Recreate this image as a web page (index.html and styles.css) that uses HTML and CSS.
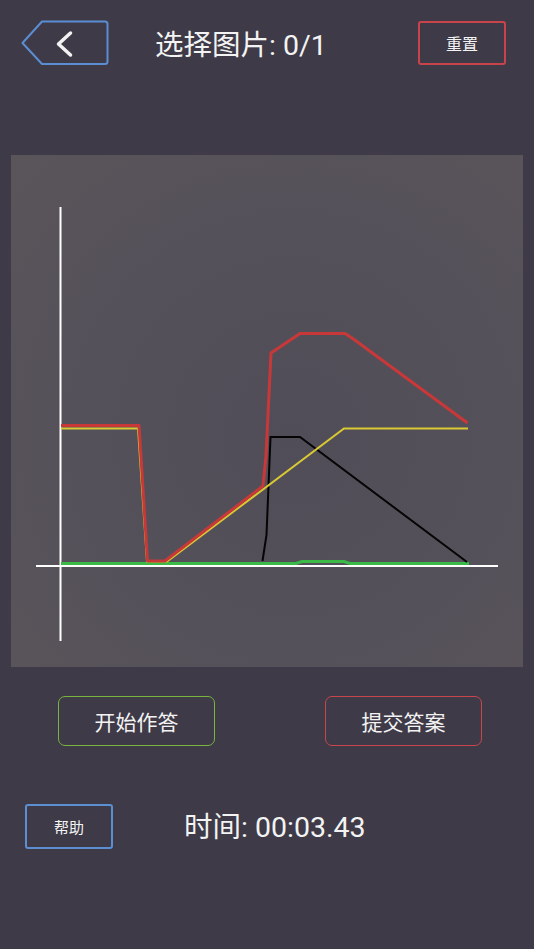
FILE: index.html
```html
<!DOCTYPE html>
<html lang="zh">
<head>
<meta charset="utf-8">
<title>选择图片</title>
<link rel="stylesheet" href="styles.css">
</head>
<body>
<div class="app">
  <header class="header">
    <button class="back" aria-label="返回">
      <svg class="back-svg" width="88" height="46" viewBox="0 0 88 46">
        <path d="M21 1.5 L84 1.5 Q86.5 1.5 86.5 4 L86.5 41.5 Q86.5 44 84 44 L21 44 L1.5 23 Z" fill="none" stroke="#5b8dd3" stroke-width="2" stroke-linejoin="round"/>
        <path d="M49.5 13 L37.5 24 L49.5 35" fill="none" stroke="#f2f2f2" stroke-width="3.5" stroke-linecap="round" stroke-linejoin="round"/>
      </svg>
    </button>
    <h1 class="title">选择图片: 0/1</h1>
    <button class="btn btn-reset">重置</button>
  </header>

  <section class="panel">
    <svg class="chart" width="512" height="512" viewBox="11 155 512 512">
      <line x1="60.5" y1="207" x2="60.5" y2="641" stroke="#ffffff" stroke-width="2"/>
      <line x1="36" y1="566" x2="498" y2="566" stroke="#ffffff" stroke-width="2"/>
      <polyline points="61,563.5 296,563.5 302,561.5 344,561.5 350,563.5 469,563.5" fill="none" stroke="#3cba48" stroke-width="3"/>
      <polyline points="262.5,561 266.5,535 270.5,437 300,437 467,562" fill="none" stroke="#050505" stroke-width="2"/>
      <polyline points="61,428.5 138,428.5 147,561.5 167,561.5 344,428.5 468,428.5" fill="none" stroke="#d9c933" stroke-width="2"/>
      <polyline points="61,425.5 139,425.5 147.5,561 165,561 263,486 266,456 271,353 300,333.5 345,333.5 352,338 467.5,423" fill="none" stroke="#c93839" stroke-width="3" stroke-linejoin="round"/>
    </svg>
  </section>

  <div class="actions">
    <button class="btn btn-start">开始作答</button>
    <button class="btn btn-submit">提交答案</button>
  </div>

  <div class="footer">
    <button class="btn btn-help">帮助</button>
    <div class="time">时间: 00:03.43</div>
  </div>
</div>
</body>
</html>
```

FILE: styles.css
```css
html, body {
  margin: 0;
  padding: 0;
}
body {
  background: #3e3a47;
  font-family: Roboto, "Noto Sans CJK SC", sans-serif;
  color: #f3f3f3;
  width: 534px;
  height: 949px;
  overflow: hidden;
}
.app {
  display: flex;
  flex-direction: column;
}
.header {
  display: flex;
  align-items: center;
  height: 46px;
  padding: 20px 28px 0 21px;
}
.back {
  padding: 0;
  margin: 0;
  border: 0;
  background: none;
  width: 88px;
  height: 46px;
  display: block;
}
.back-svg {
  display: block;
}
.title {
  margin: 0 0 0 46px;
  padding-top: 6px;
  font-size: 28.5px;
  font-weight: 400;
  line-height: 46px;
  color: #f3f3f3;
  white-space: nowrap;
}
.btn {
  background: transparent;
  color: #f3f3f3;
  font-family: Roboto, "Noto Sans CJK SC", sans-serif;
  padding: 0;
  margin: 0;
  display: flex;
  align-items: center;
  justify-content: center;
  box-sizing: border-box;
}
.btn-reset {
  margin-left: auto;
  width: 88px;
  height: 44px;
  border: 2px solid #c8444a;
  border-radius: 3px;
  font-size: 16px;
}
.panel {
  margin: 89px 11px 0 11px;
  width: 512px;
  height: 512px;
  background: radial-gradient(ellipse at 55% 55%, #514d58 0%, #55515a 55%, #5a5559 100%);
}
.chart {
  display: block;
}
.actions {
  display: flex;
  gap: 110px;
  padding: 29px 0 0 58px;
}
.btn-start, .btn-submit {
  width: 157px;
  height: 50px;
  border-radius: 7px;
  font-size: 21px;
}
.btn-start {
  border: 1.5px solid #78b43e;
}
.btn-submit {
  border: 1.5px solid #c9464d;
}
.footer {
  display: flex;
  align-items: center;
  padding: 57px 0 0 25px;
}
.btn-help {
  width: 88px;
  height: 45px;
  border: 2px solid #5c8ed2;
  border-radius: 3px;
  font-size: 15px;
}
.time {
  margin-left: 71px;
  padding-top: 2px;
  font-size: 28.5px;
  line-height: 45px;
  white-space: nowrap;
}
```
